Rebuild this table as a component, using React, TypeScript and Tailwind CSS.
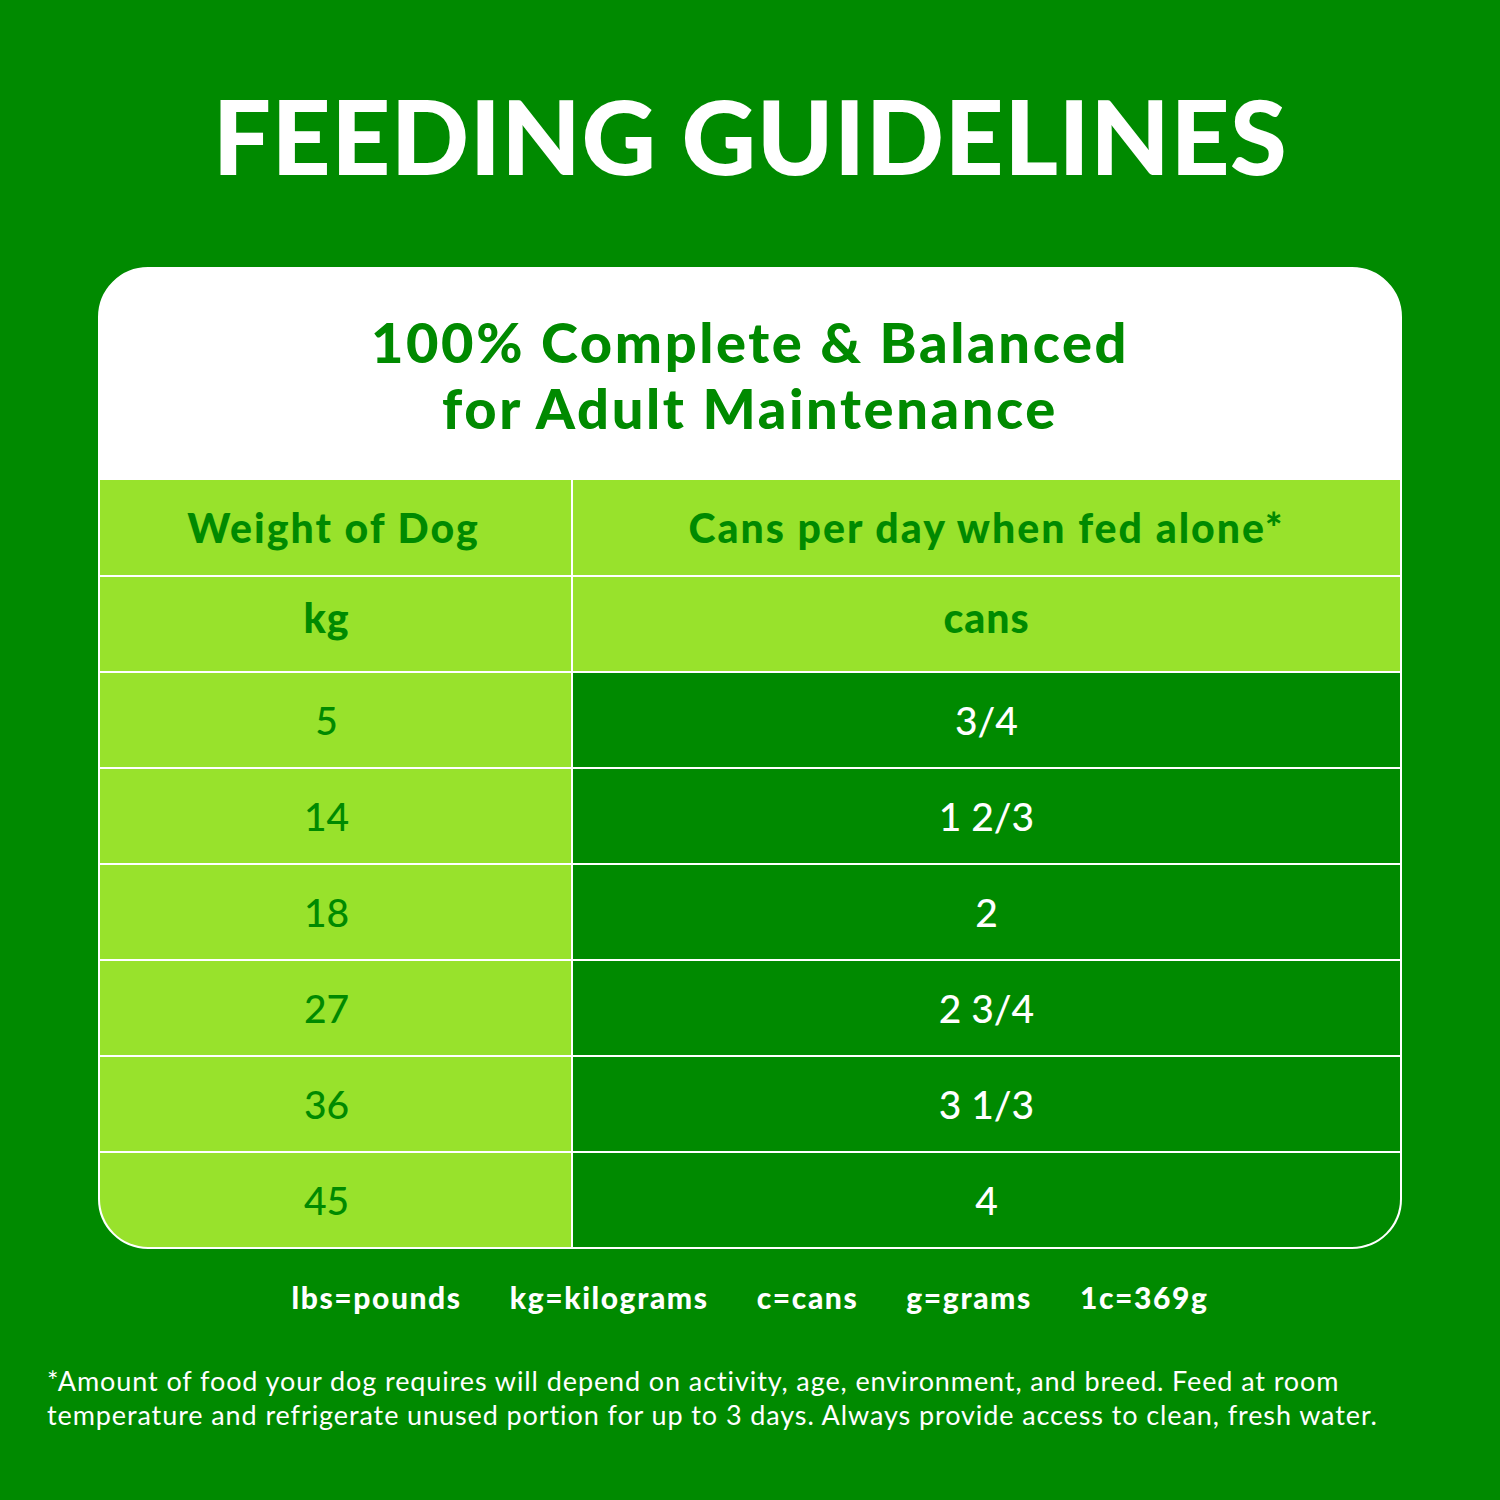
const rows = [
  { kg: "5", cans: "3/4" },
  { kg: "14", cans: "1 2/3" },
  { kg: "18", cans: "2" },
  { kg: "27", cans: "2 3/4" },
  { kg: "36", cans: "3 1/3" },
  { kg: "45", cans: "4" },
]

const legend = ["lbs=pounds", "kg=kilograms", "c=cans", "g=grams", "1c=369g"]

export default function App() {
  return (
    <div
      className="w-[1500px] h-[1500px] bg-[#008a00] text-white"
      style={{ fontFamily: "Lato, 'Open Sans', sans-serif" }}
    >
      {/* Title */}
      <div className="h-[267px] flex items-center justify-center pt-[4px]">
        <h1 className="text-[103px] font-black leading-none tracking-[0.5px]">FEEDING GUIDELINES</h1>
      </div>

      {/* Card */}
      <div className="w-[1304px] mx-auto rounded-[50px] border-2 border-white bg-white overflow-hidden">
        <div className="h-[211px] flex flex-col items-center justify-center text-[#008a00] text-[56px] font-black leading-[66px] tracking-[2.6px]">
          <span>100% Complete &amp; Balanced</span>
          <span>for Adult Maintenance</span>
        </div>

        <div className="grid grid-cols-[471px_1fr] gap-[2px] bg-white">
          <div className="h-[95px] bg-[#98e22c] text-[#008a00] text-[41px] font-black tracking-[2px] flex items-center justify-center pr-[4px]">
            Weight of Dog
          </div>
          <div className="h-[95px] bg-[#98e22c] text-[#008a00] text-[41px] font-black tracking-[2px] flex items-center justify-center">
            Cans per day when fed alone*
          </div>
          <div className="h-[94px] bg-[#98e22c] text-[#008a00] text-[41px] font-black tracking-[1px] flex items-center justify-center pb-[12px] pr-[18px]">
            kg
          </div>
          <div className="h-[94px] bg-[#98e22c] text-[#008a00] text-[41px] font-black tracking-[1px] flex items-center justify-center pb-[12px]">
            cans
          </div>
          {rows.map((r) => (
            <div key={r.kg} className="contents">
              <div className="h-[94px] bg-[#98e22c] text-[#008a00] text-[39px] font-medium flex items-center justify-center pr-[18px]">
                {r.kg}
              </div>
              <div className="h-[94px] bg-[#008a00] text-white text-[39px] font-medium flex items-center justify-center">
                {r.cans}
              </div>
            </div>
          ))}
        </div>
      </div>

      {/* Legend */}
      <div className="mt-[26px] flex justify-center gap-[48px] text-[30px] font-black tracking-[1.6px]">
        {legend.map((l) => (
          <span key={l}>{l}</span>
        ))}
      </div>

      {/* Footnote */}
      <p className="mt-[44px] px-[47px] text-[27px] leading-[34px] tracking-[0.9px]">
        *Amount of food your dog requires will depend on activity, age, environment, and breed. Feed at room
        <br />
        temperature and refrigerate unused portion for up to 3 days. Always provide access to clean, fresh water.
      </p>
    </div>
  )
}
